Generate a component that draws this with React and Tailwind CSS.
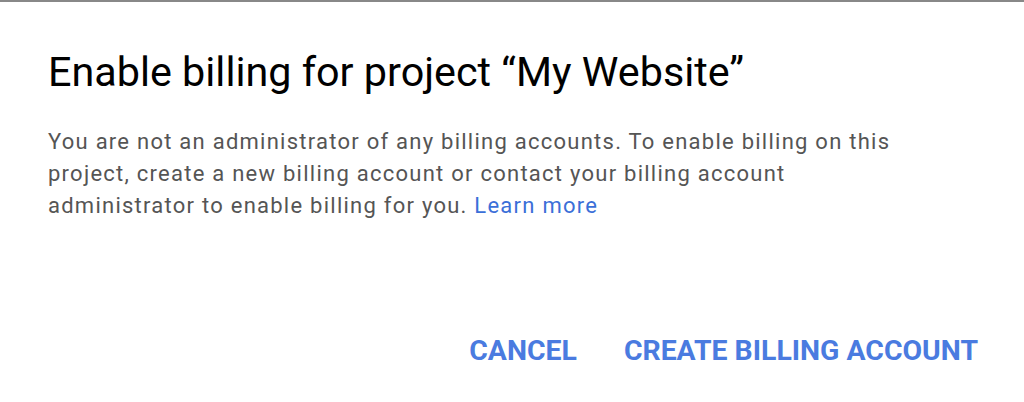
export default function App() {
  return (
    <div className="w-[1024px] h-[402px] bg-white border-t-2 border-[#888888] font-['Roboto',sans-serif] flex flex-col">
      <div className="pl-12 pr-8 pt-[44px]">
        <h1 className="text-[41.3px] leading-[52px] text-black">
          Enable billing for project “My Website”
        </h1>
        <p className="mt-[28px] text-[22px] tracking-[1.25px] leading-[32px] text-[#555555]">
          You are not an administrator of any billing accounts. To enable billing on this<br />
          project, create a new billing account or contact your billing account<br />
          administrator to enable billing for you.{' '}
          <a className="text-[#3b6fd8]" href="#">Learn more</a>
        </p>
      </div>
      <div className="mt-auto mb-[31px] flex justify-end gap-[47px] pr-[46px]">
        <button className="text-[28.4px] font-bold text-[#4a7be0] leading-[40px]">CANCEL</button>
        <button className="text-[28.4px] font-bold text-[#4a7be0] leading-[40px]">CREATE BILLING ACCOUNT</button>
      </div>
    </div>
  );
}
